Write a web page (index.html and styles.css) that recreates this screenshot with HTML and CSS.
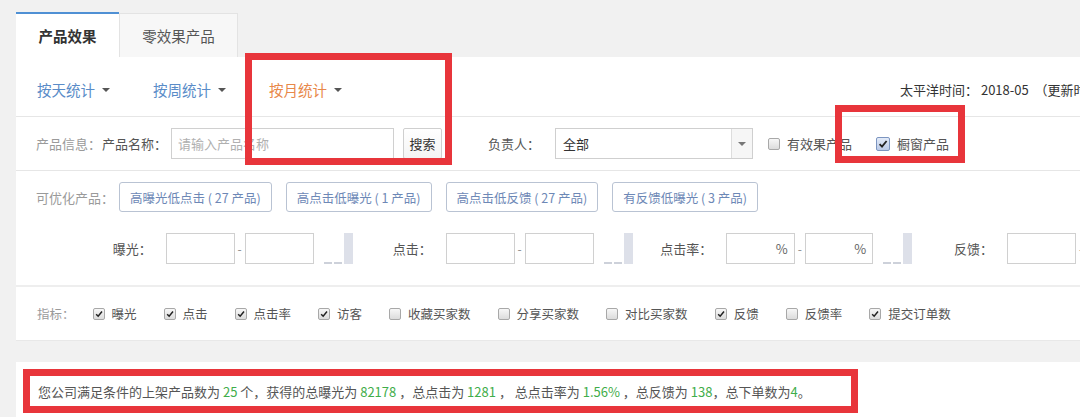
FILE: index.html
```html
<!DOCTYPE html>
<html lang="zh-CN">
<head>
    <meta charset="UTF-8">
    <meta name="viewport" content="width=device-width, initial-scale=1.0">
    <title>产品效果</title>
    <link rel="stylesheet" href="styles.css">
</head>
<body>
    <div class="page">
        <!-- 标签页 -->
        <div class="tabs">
            <div class="tab tab-active">产品效果</div>
            <div class="tab">零效果产品</div>
        </div>

        <div class="panel">
            <!-- 统计周期 -->
            <div class="period-bar">
                <a class="period">按天统计<i class="caret"></i></a>
                <a class="period">按周统计<i class="caret"></i></a>
                <a class="period period-current">按月统计<i class="caret"></i></a>
                <span class="timezone">太平洋时间：&nbsp;2018-05 &nbsp;（更新时间：2018-06-03）</span>
            </div>

            <!-- 筛选 -->
            <div class="filter-row">
                <span class="label-muted">产品信息：</span>
                <span class="label label-name">产品名称：</span>
                <input class="text-input name-input" type="text" placeholder="请输入产品名称">
                <button class="btn">搜索</button>
                <span class="label owner-label">负责人：</span>
                <div class="select">
                    <span>全部</span>
                    <span class="select-arrow"><i class="caret caret-gray"></i></span>
                </div>
                <label class="check check-effect"><span class="box"></span>有效果产品</label>
                <label class="check check-window">
                    <span class="box box-on box-focus"><svg viewBox="0 0 12 12"><path d="M2.6 6.2 L5 8.6 L9.6 3"/></svg></span>橱窗产品
                </label>
            </div>

            <!-- 可优化产品 -->
            <div class="optimize">
                <div class="opt-row">
                    <span class="label-muted opt-label">可优化产品：</span>
                    <button class="tag">高曝光低点击 ( 27 产品)</button>
                    <button class="tag">高点击低曝光 ( 1 产品)</button>
                    <button class="tag">高点击低反馈 ( 27 产品)</button>
                    <button class="tag">有反馈低曝光 ( 3 产品)</button>
                </div>
                <div class="range-row">
                    <div class="range">
                        <span class="range-label">曝光：</span>
                        <input class="text-input range-input" type="text">
                        <span class="dash">-</span>
                        <input class="text-input range-input" type="text">
                        <span class="spark"><i class="bar-s"></i><i class="bar-s"></i><i class="bar-t"></i></span>
                    </div>
                    <div class="range">
                        <span class="range-label">点击：</span>
                        <input class="text-input range-input" type="text">
                        <span class="dash">-</span>
                        <input class="text-input range-input" type="text">
                        <span class="spark"><i class="bar-s"></i><i class="bar-s"></i><i class="bar-t"></i></span>
                    </div>
                    <div class="range">
                        <span class="range-label">点击率：</span>
                        <span class="text-input range-input pct">%</span>
                        <span class="dash">-</span>
                        <span class="text-input range-input pct">%</span>
                        <span class="spark"><i class="bar-s"></i><i class="bar-s"></i><i class="bar-t"></i></span>
                    </div>
                    <div class="range">
                        <span class="range-label">反馈：</span>
                        <input class="text-input range-input" type="text">
                        <span class="dash">-</span>
                        <input class="text-input range-input" type="text">
                    </div>
                </div>
            </div>

            <!-- 指标 -->
            <div class="metrics-row">
                <span class="label-muted metrics-label">指标：</span>
                <label class="check"><span class="box box-on"><svg viewBox="0 0 12 12"><path d="M2.6 6.2 L5 8.6 L9.6 3"/></svg></span>曝光</label>
                <label class="check"><span class="box box-on"><svg viewBox="0 0 12 12"><path d="M2.6 6.2 L5 8.6 L9.6 3"/></svg></span>点击</label>
                <label class="check"><span class="box box-on"><svg viewBox="0 0 12 12"><path d="M2.6 6.2 L5 8.6 L9.6 3"/></svg></span>点击率</label>
                <label class="check"><span class="box box-on"><svg viewBox="0 0 12 12"><path d="M2.6 6.2 L5 8.6 L9.6 3"/></svg></span>访客</label>
                <label class="check"><span class="box"></span>收藏买家数</label>
                <label class="check"><span class="box"></span>分享买家数</label>
                <label class="check"><span class="box"></span>对比买家数</label>
                <label class="check"><span class="box box-on"><svg viewBox="0 0 12 12"><path d="M2.6 6.2 L5 8.6 L9.6 3"/></svg></span>反馈</label>
                <label class="check"><span class="box"></span>反馈率</label>
                <label class="check"><span class="box box-on"><svg viewBox="0 0 12 12"><path d="M2.6 6.2 L5 8.6 L9.6 3"/></svg></span>提交订单数</label>
            </div>
        </div>

        <!-- 汇总 -->
        <div class="summary">
            您公司满足条件的上架产品数为 <b>25</b> 个，获得的总曝光为 <b>82178</b> ，总点击为 <b>1281</b> ， 总点击率为 <b>1.56%</b> ，总反馈为 <b>138</b>，总下单数为<b>4</b>。
        </div>
    </div>

    <!-- 红框标注 -->
    <div class="mark mark-month"></div>
    <div class="mark mark-window"></div>
    <div class="mark mark-summary"></div>
</body>
</html>
```

FILE: styles.css
```css
* {
    margin: 0;
    padding: 0;
    box-sizing: border-box;
}

body {
    background-color: #f1f1f1;
    font-family: "Noto Sans CJK SC", "Liberation Sans", sans-serif;
    font-size: 13px;
    color: #555;
    width: 1080px;
    height: 417px;
    overflow: hidden;
    position: relative;
}

.page {
    padding: 12px 0 0 16px;
}

/* 标签页 */
.tabs {
    display: flex;
    height: 45px;
}

.tab {
    width: 119px;
    margin-top: 1px;
    background-color: #f7f7f7;
    border: 1px solid #e3e3e3;
    border-bottom: none;
    font-size: 14.5px;
    color: #555;
    display: flex;
    justify-content: center;
    align-items: center;
}

.tab-active {
    width: 103px;
    margin-top: 0;
    background-color: #fff;
    border: none;
    border-top: 2px solid #4f90d4;
    font-weight: bold;
    color: #333;
}

.panel {
    background-color: #fff;
    border-bottom: 1px solid #e8e8e8;
}

/* 统计周期 */
.period-bar {
    height: 60px;
    padding: 6px 0 0 21px;
    display: flex;
    align-items: center;
    border-bottom: 1px solid #e6e6e6;
    white-space: nowrap;
}

.period {
    display: flex;
    align-items: center;
    font-size: 14.5px;
    color: #5a8cc8;
    margin-right: 43px;
}

.period-current {
    color: #e8884a;
}

.caret {
    display: inline-block;
    width: 0;
    height: 0;
    margin-left: 7px;
    border-left: 4px solid transparent;
    border-right: 4px solid transparent;
    border-top: 4px solid #555;
}

.caret-gray {
    margin-left: 0;
    border-top-color: #777;
}

.timezone {
    margin-left: 515px;
    color: #333;
}

/* 筛选 */
.filter-row {
    height: 54px;
    padding-left: 20px;
    display: flex;
    align-items: center;
    border-bottom: 1px solid #e6e6e6;
    white-space: nowrap;
}

.label-muted {
    color: #9a9a9a;
}

.label {
    color: #555;
}

.label-name {
    margin-left: 1px;
}

.text-input {
    height: 31px;
    border: 1px solid #d0d0d0;
    background-color: #fff;
    font-family: inherit;
    font-size: 13px;
    color: #555;
    outline: none;
}

.name-input {
    width: 223px;
    margin-left: 4px;
    padding-left: 6px;
}

.name-input::placeholder {
    color: #b0b0b0;
}

.btn {
    height: 31px;
    width: 39px;
    margin-left: 9px;
    border: 1px solid #cfcfcf;
    border-radius: 2px;
    background: linear-gradient(#fff, #f4f4f4);
    font-family: inherit;
    font-size: 13px;
    color: #333;
}

.owner-label {
    margin-left: 46px;
}

.select {
    width: 198px;
    height: 31px;
    margin-left: 15px;
    border: 1px solid #cfcfcf;
    display: flex;
    align-items: center;
    justify-content: space-between;
    padding-left: 7px;
    color: #333;
}

.select-arrow {
    width: 21px;
    height: 100%;
    border-left: 1px solid #ddd;
    background-color: #f6f6f6;
    display: flex;
    justify-content: center;
    align-items: center;
}

.check {
    display: flex;
    align-items: center;
    color: #555;
}

.box {
    width: 12px;
    height: 12px;
    margin-right: 7px;
    border: 1px solid #a8a8a8;
    border-radius: 2px;
    background: linear-gradient(#f7f7f7, #dcdcdc);
    display: flex;
}

.box svg {
    width: 10px;
    height: 10px;
    fill: none;
    stroke: #222;
    stroke-width: 1.8;
}

.box-focus {
    border-color: #7c95c0;
    background: linear-gradient(#e3ebf8, #b9c9e6);
}

.check-effect {
    margin-left: 15px;
}

.check-window {
    margin-left: 24px;
}

.check-window .box {
    width: 14px;
    height: 14px;
}

.check-window .box svg {
    width: 12px;
    height: 12px;
}

/* 可优化产品 */
.optimize {
    padding: 11px 0 21px 20px;
    border-bottom: 2px solid #eeeeee;
}

.opt-row {
    height: 30px;
    display: flex;
    align-items: center;
    gap: 14px;
    white-space: nowrap;
}

.opt-label {
    margin-right: -9px;
}

.tag {
    height: 30px;
    padding: 0 10px;
    border: 1px solid #b9c3d3;
    border-radius: 3px;
    background-color: #fff;
    font-family: inherit;
    font-size: 12.5px;
    color: #6d88b6;
}

.range-row {
    height: 31px;
    margin-top: 21px;
    padding-left: 37px;
    display: flex;
    align-items: center;
}

.range {
    width: 280px;
    flex-shrink: 0;
    display: flex;
    align-items: center;
}

.range-label {
    width: 80px;
    margin-right: 14px;
    text-align: right;
    color: #555;
}

.range-input {
    width: 69px;
    display: flex;
    align-items: center;
    justify-content: flex-end;
    padding-right: 6px;
    color: #666;
}

.dash {
    width: 10px;
    text-align: center;
    color: #888;
    font-size: 12px;
}

.spark {
    width: 30px;
    height: 31px;
    margin-left: 10px;
    display: flex;
    align-items: flex-end;
    gap: 2px;
}

.bar-s {
    width: 8px;
    height: 2px;
    background-color: #cdd1da;
}

.bar-t {
    width: 9px;
    height: 31px;
    background-color: #dde0e9;
}

/* 指标 */
.metrics-row {
    height: 53px;
    padding-left: 21px;
    display: flex;
    align-items: center;
    gap: 27px;
    font-size: 12.5px;
    white-space: nowrap;
}

.metrics-label {
    margin-right: -9px;
}

/* 汇总 */
.summary {
    margin-top: 21px;
    height: 60px;
    padding: 20px 0 0 22px;
    background-color: #fff;
    line-height: 20px;
    color: #555;
    white-space: nowrap;
}

.summary b {
    font-weight: normal;
    color: #3fad4a;
}

/* 红框标注 */
.mark {
    position: absolute;
    border: 7px solid #e8353b;
}

.mark-month {
    left: 245px;
    top: 53px;
    width: 207px;
    height: 112px;
}

.mark-window {
    left: 835px;
    top: 105px;
    width: 130px;
    height: 58px;
}

.mark-summary {
    left: 23px;
    top: 369px;
    width: 835px;
    height: 44px;
}
```
